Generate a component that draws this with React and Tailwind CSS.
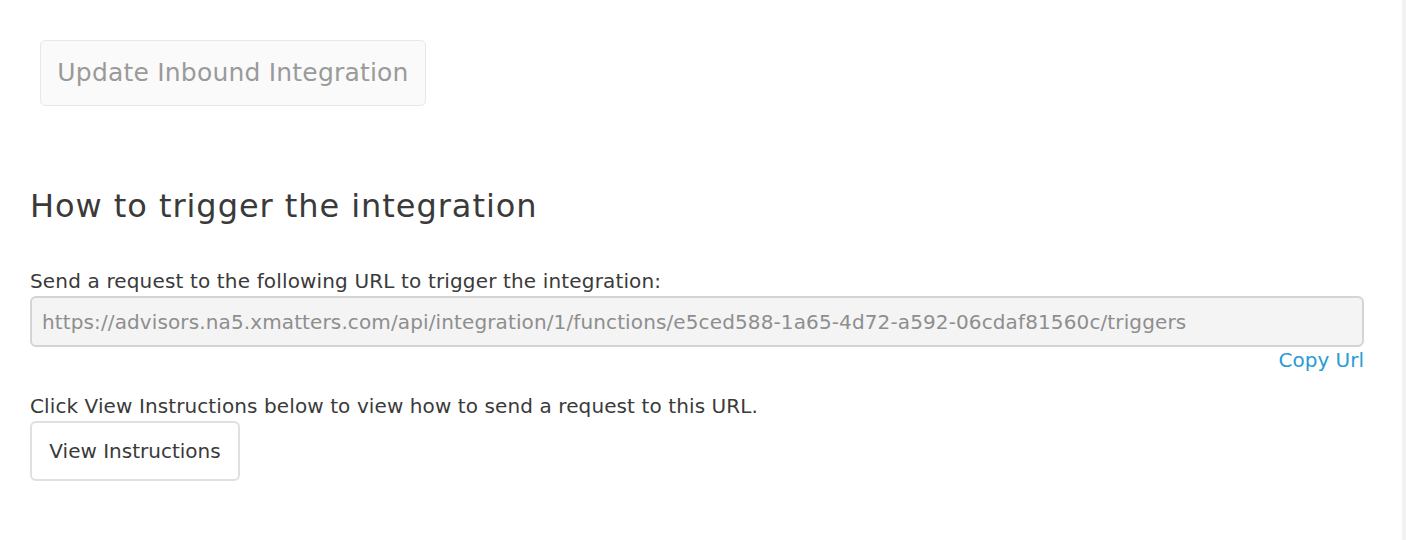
export default function App() {
  return (
    <div className="flex h-[540px] w-[1406px] overflow-hidden bg-white" style={{ fontFamily: '"DejaVu Sans", "Open Sans", sans-serif' }}>
      <div className="flex-1 pl-[30px] pr-[38px]">
        <div className="pl-[10px] pt-[40px]">
          <button className="h-[66px] w-[386px] rounded-[5px] border border-[#e8e8e8] bg-[#fafafa] text-[25px] tracking-[0.2px] text-[#9a9a9a]">
            Update Inbound Integration
          </button>
        </div>
        <h2 className="mt-[80px] text-[32px] leading-[40px] tracking-[0.95px] text-[#3a3a3a]">How to trigger the integration</h2>
        <p className="mt-[43px] text-[20px] leading-[24px] tracking-[0.15px] text-[#3a3a3a]">Send a request to the following URL to trigger the integration:</p>
        <div className="mt-[3px] flex h-[51px] items-center rounded-[6px] border-2 border-[#d4d4d4] bg-[#f4f4f4] px-[10px] text-[20px] tracking-[0.12px] text-[#8e8e8e]">
          https://advisors.na5.xmatters.com/api/integration/1/functions/e5ced588-1a65-4d72-a592-06cdaf81560c/triggers
        </div>
        <div className="flex justify-end">
          <span className="mt-[1px] text-[20px] leading-[24px] text-[#2a9bd4]">Copy Url</span>
        </div>
        <p className="mt-[22px] text-[20px] leading-[24px] tracking-[0.1px] text-[#3a3a3a]">Click View Instructions below to view how to send a request to this URL.</p>
        <button className="mt-[3px] h-[60px] w-[210px] rounded-[6px] border-2 border-[#e0e0e0] bg-white text-[20px] text-[#3a3a3a]">
          View Instructions
        </button>
      </div>
      <div className="h-full w-[4px] bg-[#f2f2f2]" />
    </div>
  );
}
